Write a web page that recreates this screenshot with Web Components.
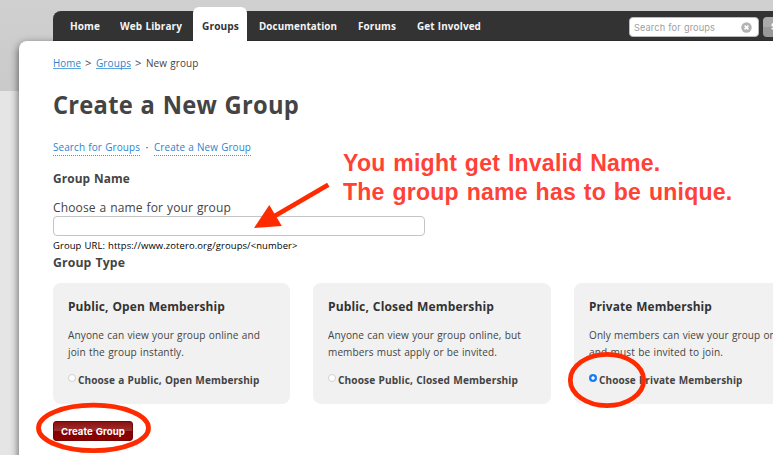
<!DOCTYPE html>
<html lang="en"><head><meta charset="utf-8"><title>Create a New Group</title>
<style>
html,body{margin:0;height:455px;overflow:hidden}
body{font:11px/16px "Open Sans","Noto Sans",sans-serif;color:#444;background:#e5e5e5}
</style></head><body>
<group-page>
 <site-nav slot="nav">
  <nav-item start="17" w="30">Home</nav-item>
  <nav-item start="20" w="62">Web Library</nav-item>
  <nav-item w="37" active>Groups</nav-item>
  <nav-item start="12" w="78">Documentation</nav-item>
  <nav-item start="21" w="38">Forums</nav-item>
  <nav-item start="21" w="64">Get Involved</nav-item>
  <search-box slot="search"></search-box>
 </site-nav>
 <bread-crumbs></bread-crumbs>
 <page-title><fit-text w="246">Create a New Group</fit-text></page-title>
 <sub-links></sub-links>
 <group-form>
  <type-card tw="157" cw="181.5" heading="Public, Open Membership" choice="Choose a Public, Open Membership"><fit-text w="192">Anyone can view your group online and</fit-text><br><fit-text w="116">join the group instantly.</fit-text></type-card>
  <type-card tw="166" cw="180" heading="Public, Closed Membership" choice="Choose Public, Closed Membership"><fit-text w="193">Anyone can view your group online, but</fit-text><br><fit-text w="169">members must apply or be invited.</fit-text></type-card>
  <type-card tw="123" cw="143.5" heading="Private Membership" choice="Choose Private Membership" checked><fit-text w="204">Only members can view your group online</fit-text><br><fit-text w="134">and must be invited to join.</fit-text></type-card>
 </group-form>
 <mark-up slot="marks"></mark-up>
</group-page>
<script>
const define=(name,html)=>customElements.define(name,class extends HTMLElement{
  constructor(){super();this.attachShadow({mode:'open'});}
  connectedCallback(){
    this.shadowRoot.innerHTML=html.replace(/\{(\w+)\}/g,(m,k)=>this.getAttribute(k)||'');
  }
});
define('group-page',`<style>
:host{display:flow-root;position:relative;width:773px;height:455px;overflow:hidden;background:linear-gradient(#d0d0d0,#cacaca) 0 0/100% 91px no-repeat #e5e5e5}
.top{display:flex;height:30px;padding:11px 0 0 53px;position:relative;z-index:1}
.top ::slotted(*){flex:1}
main{box-sizing:border-box;height:430px;margin-left:19px;margin-right:-30px;padding:14px 0 0 34px;background:#fff;border-radius:8px 0 0 0;box-shadow:0 3px 8px rgba(0,0,0,.65)}
</style><div class="top"><slot name="nav"></slot></div><main><slot></slot></main><slot name="marks"></slot>`);
define('site-nav',`<style>
:host{display:flex;height:30px;background:#333;border-radius:8px 0 0 0;box-shadow:inset 0 -1px #2b2b2b}
.s{margin-left:auto}
</style><slot></slot><div class="s"><slot name="search"></slot></div>`);
define('nav-item',`<style>
:host{display:block;padding:7px 0 0 {start}px;font-weight:700;font-size:11.3px;line-height:16px;color:#f5f5f5;height:23px}
:host([active]){background:#fff;color:#333;border-radius:6px 6px 0 0;height:27px;margin:-4px 0 0 11px;padding:11px 9px 0 8.5px;width:36.5px}
</style><fit-text w="{w}"><slot></slot></fit-text>`);
define('search-box',`<style>
:host{display:flex;gap:4px;padding-top:6px;width:144px;overflow:hidden;font:9.2px/20px Inter,sans-serif}
.f{box-sizing:border-box;flex:none;width:130px;height:20px;background:#fff;border:1px solid #bbb;border-radius:4px;padding:0 6px 0 3.5px;display:flex;align-items:center;justify-content:space-between;color:#a0a0a0;line-height:19px}
.b{box-sizing:border-box;flex:none;width:60px;height:20px;border-radius:4px;background:linear-gradient(#aaa 50%,#999 50%);color:#fff;padding-left:8px;font-weight:700}
svg{display:block}
</style><div class="f"><fit-text w="81">Search for groups</fit-text><svg width="11" height="11" viewBox="0 0 11 11"><circle cx="5.5" cy="5.5" r="5.2" fill="#b3b3b3"/><path d="M3.6 3.6l3.8 3.8M7.4 3.6L3.6 7.4" stroke="#fff" stroke-width="1.6"/></svg></div><div class="b">S</div>`);
define('bread-crumbs',`<style>
:host{display:flex;height:16px;font-size:11.3px}
a{color:#2a85cf;text-decoration:none;display:block;height:13px;border-bottom:1px solid #5ea5dc}
.gt{margin:0 5px 0 4px;width:6px}
</style><a><fit-text w="28">Home</fit-text></a><span class="gt">&gt;</span><a><fit-text w="35">Groups</fit-text></a><span class="gt">&gt;</span><fit-text w="52.5">New group</fit-text>`);
define('page-title',`<style>:host{display:block;margin-top:17px;height:32px;font-weight:700;font-size:25px;line-height:32px}</style><slot></slot>`);
define('sub-links',`<style>
:host{display:flex;margin-top:19px;height:17px;font-size:11.3px}
a{color:#2a85cf;display:block;border-bottom:1px dotted #888}
i{width:14px;text-align:center;font-style:normal}
</style><a><fit-text w="87">Search for Groups</fit-text></a><i>·</i><a><fit-text w="97">Create a New Group</fit-text></a>`);
define('group-form',`<style>
:host{display:block;margin-top:13px}
h2{margin:0;font-size:13px;line-height:18px}
label{display:block;margin-top:11px;font-size:13.4px;line-height:18px}
.in{box-sizing:border-box;width:372px;height:20px;border:1px solid #c4c4c4;border-radius:4px}
.url{margin-top:4px;height:13px;font-size:9.2px;line-height:12px;color:#000}
.cards{display:grid;grid-template-columns:237px 238px 238px;gap:23px;margin-top:12px}
button{display:block;box-sizing:border-box;width:80px;height:20px;margin-top:17px;padding:1px 0 0 7px;text-align:left;border:1px solid #710606;border-radius:3px;background:linear-gradient(#8d1111,#9d3030 50%,#850000 50%,#8a0000);color:#fff;font:700 9.6px/18px Inter,sans-serif}
</style><h2><fit-text w="77">Group Name</fit-text></h2><label><fit-text w="178">Choose a name for your group</fit-text></label><div class="in"></div>
<div class="url"><fit-text w="244.5">Group URL: https://www.zotero.org/groups/&lt;number&gt;</fit-text></div>
<h2><fit-text w="72">Group Type</fit-text></h2><div class="cards"><slot></slot></div><button><fit-text w="64">Create Group</fit-text></button>`);
define('type-card',`<style>
:host{display:block;box-sizing:border-box;height:121px;padding:14px 0 0 15.2px;border-radius:8px;background:#f1f1f1;white-space:nowrap}
h3{margin:0;font-size:13px;line-height:18px;color:#333}
p{margin:11px 0 12px;font-size:11.3px;line-height:17px}
.r{display:flex;font-weight:700;font-size:11.3px;line-height:16px}
.d{box-sizing:border-box;width:8px;height:8px;border:1px solid #d0d0d0;border-radius:50%;background:#fff;margin:2px 1.5px 0 0}
:host([checked]) .d{border:none;background:radial-gradient(circle,#fff 1.3px,#167efb 2px)}
</style><h3><fit-text w="{tw}">{heading}</fit-text></h3><p><slot></slot></p><div class="r"><span class="d"></span><fit-text w="{cw}">{choice}</fit-text></div>`);
define('mark-up',`<style>
:host{position:absolute;inset:0;z-index:2;pointer-events:none}
svg{position:absolute;left:0;top:0}
.t{position:absolute;left:342.5px;top:148px;font:700 24px/29px "Liberation Sans",Arial,sans-serif;color:#ff4136}
</style><svg width="773" height="455"><g fill="none" stroke="#ff2b00" stroke-width="4.8"><ellipse cx="93.5" cy="427.9" rx="55" ry="22.7"/><ellipse cx="607" cy="380" rx="36.7" ry="25.6"/><path d="M328.3 184.8L273 217"/></g><path d="M254 228L269.3 205L281.8 226Z" fill="#ff2b00"/></svg>
<div class="t"><fit-text w="317.5">You might get Invalid Name.</fit-text><br><fit-text w="389.5">The group name has to be unique.</fit-text></div>`);
// Scales its line of text horizontally to the width given in "w".
customElements.define('fit-text',class extends HTMLElement{
  constructor(){super();this.attachShadow({mode:'open'}).innerHTML='<style>:host{display:inline-block;white-space:nowrap;vertical-align:top}span{display:inline-block;vertical-align:top;transform-origin:0 0;letter-spacing:.01em;word-spacing:.05em}</style><span><slot></slot></span>';}
  connectedCallback(){this.fit();requestAnimationFrame(()=>this.fit());}
  fit(){
    const s=this.shadowRoot.querySelector('span'),w=+this.getAttribute('w'),cur=s.offsetWidth&&parseFloat(getComputedStyle(s).width);
    this.style.width=w+'px';
    if(cur)s.style.transform='scaleX('+w/cur+')';
  }
});
</script>
</body></html>
